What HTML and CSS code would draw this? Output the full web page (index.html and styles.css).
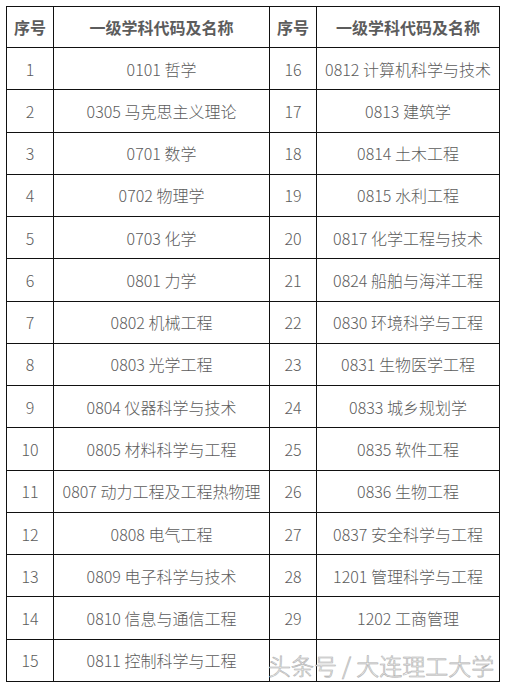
FILE: index.html
```html
<!DOCTYPE html>
<html lang="zh">
<head>
<meta charset="utf-8">
<link rel="stylesheet" href="styles.css">
</head>
<body>
<div class="wrap">
<table class="tbl">
<colgroup><col class="c-no"><col class="c-name"><col class="c-no"><col class="c-name2"></colgroup>
<thead>
<tr class="head"><th>序号</th><th>一级学科代码及名称</th><th>序号</th><th>一级学科代码及名称</th></tr>
</thead>
<tbody>
<tr><td>1</td><td>0101 哲学</td><td>16</td><td>0812 计算机科学与技术</td></tr>
<tr><td>2</td><td>0305 马克思主义理论</td><td>17</td><td>0813 建筑学</td></tr>
<tr><td>3</td><td>0701 数学</td><td>18</td><td>0814 土木工程</td></tr>
<tr><td>4</td><td>0702 物理学</td><td>19</td><td>0815 水利工程</td></tr>
<tr><td>5</td><td>0703 化学</td><td>20</td><td>0817 化学工程与技术</td></tr>
<tr><td>6</td><td>0801 力学</td><td>21</td><td>0824 船舶与海洋工程</td></tr>
<tr><td>7</td><td>0802 机械工程</td><td>22</td><td>0830 环境科学与工程</td></tr>
<tr><td>8</td><td>0803 光学工程</td><td>23</td><td>0831 生物医学工程</td></tr>
<tr><td>9</td><td>0804 仪器科学与技术</td><td>24</td><td>0833 城乡规划学</td></tr>
<tr><td>10</td><td>0805 材料科学与工程</td><td>25</td><td>0835 软件工程</td></tr>
<tr><td>11</td><td>0807 动力工程及工程热物理</td><td>26</td><td>0836 生物工程</td></tr>
<tr><td>12</td><td>0808 电气工程</td><td>27</td><td>0837 安全科学与工程</td></tr>
<tr><td>13</td><td>0809 电子科学与技术</td><td>28</td><td>1201 管理科学与工程</td></tr>
<tr><td>14</td><td>0810 信息与通信工程</td><td>29</td><td>1202 工商管理</td></tr>
<tr><td>15</td><td>0811 控制科学与工程</td><td></td><td></td></tr>
</tbody>
</table>
<div class="mark">头条号 / 大连理工大学</div>
</div>
</body>
</html>
```
FILE: styles.css
```css
html, body {
  margin: 0;
  padding: 0;
  background: #fff;
}
.wrap {
  position: relative;
  width: 506px;
  height: 689px;
  overflow: hidden;
  padding: 6px 0 0 6px;
  box-sizing: border-box;
}
.tbl {
  border-collapse: collapse;
  table-layout: fixed;
  width: 494px;
  font-family: "Noto Sans CJK SC", "Noto Sans", sans-serif;
  font-size: 16px;
  font-weight: 300;
  color: #5c5c5c;
}
.c-no { width: 47px; }
.c-name { width: 216px; }
.c-name2 { width: 183px; }
.tbl th, .tbl td {
  border: 1px solid #111;
  text-align: center;
  padding: 0;
  white-space: nowrap;
  overflow: hidden;
}
.head th {
  height: 40px;
  font-weight: bold;
}
.tbl tbody td {
  height: 41.27px;
}
.mark {
  position: absolute;
  left: 268px;
  top: 648px;
  font-family: "Noto Sans CJK SC", sans-serif;
  font-weight: 300;
  font-size: 23px;
  color: #fff;
  -webkit-text-stroke: 0.6px #b0b0b0;
  text-shadow: 0 0 1px rgba(0,0,0,0.15);
  white-space: nowrap;
}
```
